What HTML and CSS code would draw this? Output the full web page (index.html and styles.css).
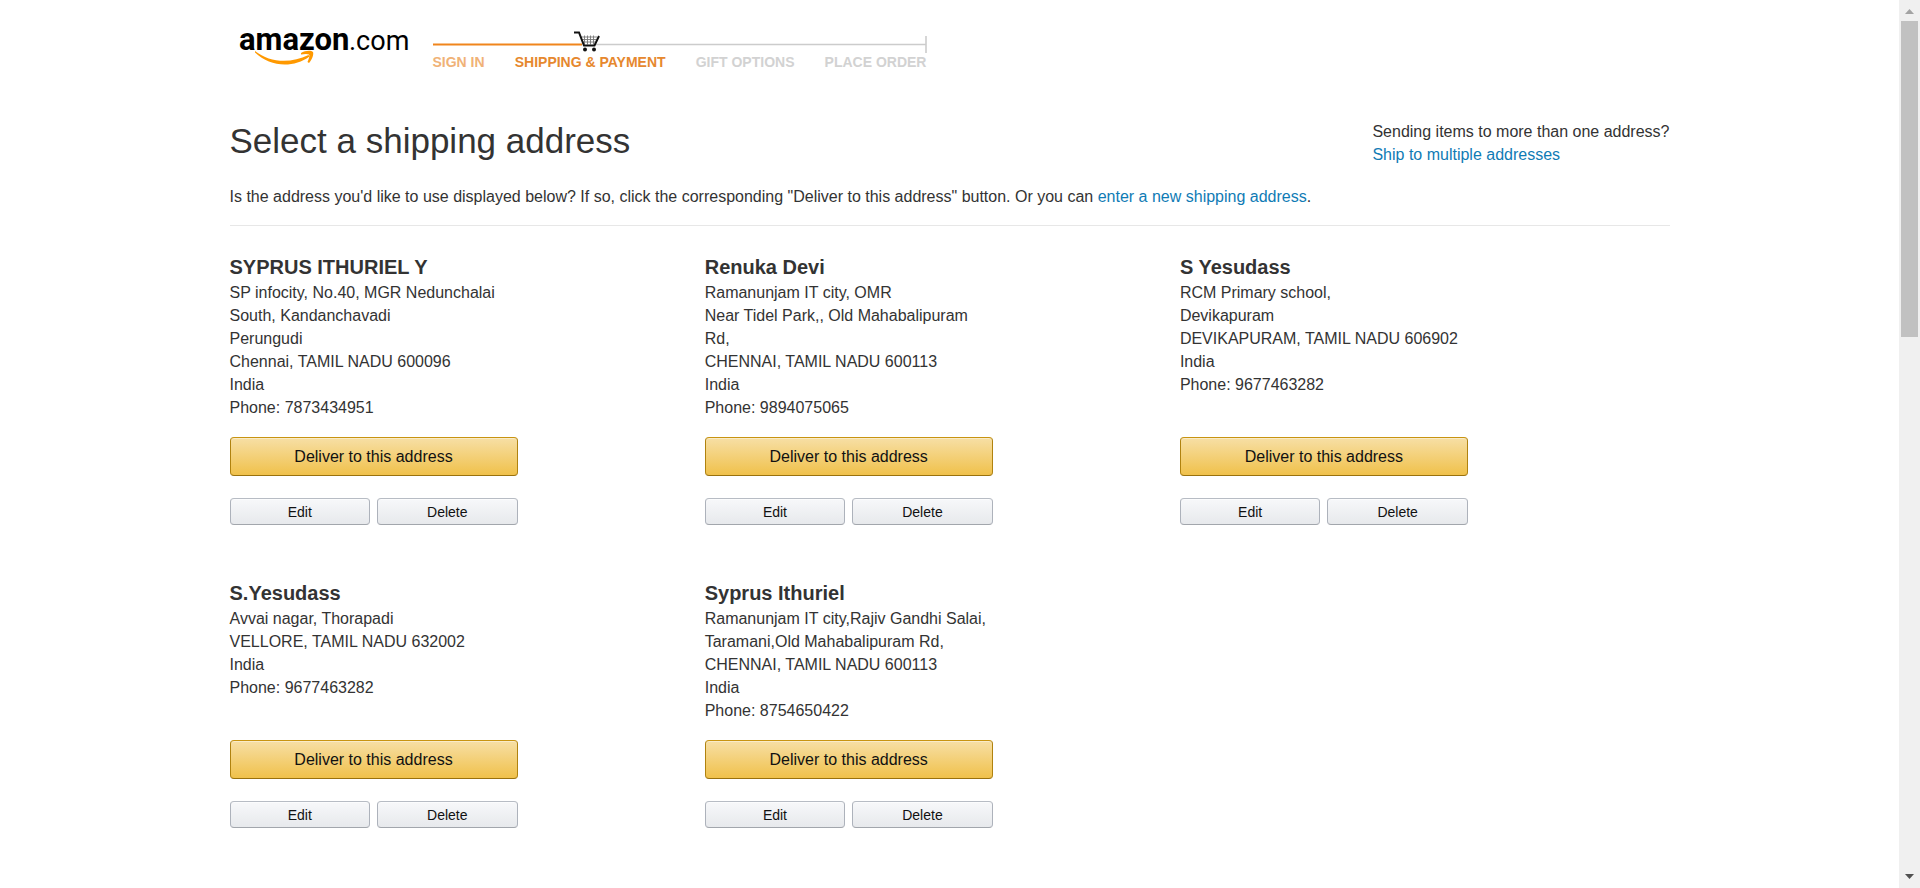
FILE: index.html
```
<!DOCTYPE html>
<html lang="en">
<head>
<meta charset="utf-8">
<title>Select a shipping address</title>
<link rel="stylesheet" href="styles.css">
</head>
<body>
<div class="page">
  <div class="content">
    <header class="header">
      <svg class="logo" width="176" height="48" viewBox="0 0 176 48" role="img" aria-label="amazon.com">
        <text class="logo-bold" x="-1" y="28">amazon</text>
        <text class="logo-light" x="109" y="28">.com</text>
        <path d="M15 29C30 41 51 41.500 68.500 33L69.500 34.500C53 46.500 30 45 15 30.500Z" fill="#f90"/>
        <path d="M61 31C65 28.500 71 28 73 30C74 32.500 72 38 69 41L67.500 40C69 36.500 70 33.500 69 32.500C67 31.500 64 32 61 32.500Z" fill="#f90"/>
      </svg>
      <div class="progress">
        <svg class="track" width="494" height="25" viewBox="0 0 494 25" aria-hidden="true">
          <path d="M150 14.500H493" stroke="#ccc" stroke-width="1.600"/>
          <path d="M493 6v17" stroke="#ccc" stroke-width="1.600"/>
          <path d="M0 14.500H149" stroke="#f0851c" stroke-width="2"/>
          <path d="M146 5h20l-4 10h-12z" fill="#fff"/>
          <path d="M147.500 7H164M148.500 9.500H163M149.500 12H162M151.500 5.500v9M154.500 5.500v9M157.500 5.500v9M160.500 5.500v9" stroke="#777" stroke-width=".9"/>
          <path d="M141 2.500H146L151 15.500H161.500L166 6" fill="none" stroke="#111" stroke-width="2"/>
          <circle cx="152" cy="19.500" r="2" fill="#111"/><circle cx="161" cy="19.500" r="2" fill="#111"/>
        </svg>
        <ol class="steps">
          <li class="done">SIGN IN</li>
          <li class="current">SHIPPING &amp; PAYMENT</li>
          <li>GIFT OPTIONS</li>
          <li>PLACE ORDER</li>
        </ol>
      </div>
    </header>
    <main>
      <div class="intro">
        <div>
          <h1>Select a shipping address</h1>
          <p class="lead">Is the address you'd like to use displayed below? If so, click the corresponding "Deliver to this address" button. Or you can <a href="#">enter a new shipping address</a>.</p>
        </div>
        <p class="multiple">Sending items to more than one address?<br><a href="#">Ship to multiple addresses</a></p>
      </div>
      <div class="cards">
        <section class="card">
          <h2>SYPRUS ITHURIEL Y</h2>
          <address>SP infocity, No.40, MGR Nedunchalai South, Kandanchavadi<br>Perungudi<br>Chennai, TAMIL NADU 600096<br>India<br>Phone: 7873434951</address>
          <button class="btn primary" type="button">Deliver to this address</button>
          <div class="actions"><button class="btn" type="button">Edit</button><button class="btn" type="button">Delete</button></div>
        </section>
        <section class="card">
          <h2>Renuka Devi</h2>
          <address>Ramanunjam IT city, OMR<br>Near Tidel Park,, Old Mahabalipuram Rd,<br>CHENNAI, TAMIL NADU 600113<br>India<br>Phone: 9894075065</address>
          <button class="btn primary" type="button">Deliver to this address</button>
          <div class="actions"><button class="btn" type="button">Edit</button><button class="btn" type="button">Delete</button></div>
        </section>
        <section class="card">
          <h2>S Yesudass</h2>
          <address>RCM Primary school,<br>Devikapuram<br>DEVIKAPURAM, TAMIL NADU 606902<br>India<br>Phone: 9677463282</address>
          <button class="btn primary" type="button">Deliver to this address</button>
          <div class="actions"><button class="btn" type="button">Edit</button><button class="btn" type="button">Delete</button></div>
        </section>
        <section class="card">
          <h2>S.Yesudass</h2>
          <address>Avvai nagar, Thorapadi<br>VELLORE, TAMIL NADU 632002<br>India<br>Phone: 9677463282</address>
          <button class="btn primary" type="button">Deliver to this address</button>
          <div class="actions"><button class="btn" type="button">Edit</button><button class="btn" type="button">Delete</button></div>
        </section>
        <section class="card">
          <h2>Syprus Ithuriel</h2>
          <address>Ramanunjam IT city,Rajiv Gandhi Salai,<br>Taramani,Old Mahabalipuram Rd,<br>CHENNAI, TAMIL NADU 600113<br>India<br>Phone: 8754650422</address>
          <button class="btn primary" type="button">Deliver to this address</button>
          <div class="actions"><button class="btn" type="button">Edit</button><button class="btn" type="button">Delete</button></div>
        </section>
      </div>
    </main>
  </div>
</div>
<div class="scrollbar" aria-hidden="true">
  <svg width="21" height="21" viewBox="0 0 21 21"><path d="M6 14L10.500 9L15 14Z" fill="#a3a3a3"/></svg>
  <div class="rail"><div class="thumb"></div></div>
  <svg width="21" height="21" viewBox="0 0 21 21"><path d="M6 7L10.500 12L15 7Z" fill="#505050"/></svg>
</div>
</body>
</html>
```
FILE: styles.css
```
* { box-sizing: border-box; }

body {
  margin: 0;
  display: flex;
  min-height: 100vh;
  background: #fff;
  color: #333;
  font: 16px/23px "Liberation Sans", Arial, sans-serif;
}

h1, h2, p, ol { margin: 0; padding: 0; }
a { color: #0f7bb5; text-decoration: none; }

.page { flex: 1; min-width: 0; }
.content { max-width: 1440px; margin: 0 auto; }

.header {
  display: flex;
  gap: 17px;
  padding: 22px 10px 0;
}
.logo { flex: none; overflow: visible; }
.logo text { font-family: Roboto, "Liberation Sans", sans-serif; fill: #000; }
.logo-bold { font-size: 31px; font-weight: 700; }
.logo-light { font-size: 27px; }

.progress { padding-top: 8px; }
.track { display: block; overflow: visible; }
.steps {
  display: flex;
  justify-content: space-between;
  list-style: none;
  color: #d2d2d2;
  font-size: 14px;
  font-weight: 700;
  line-height: 14px;
  white-space: nowrap;
}
.done { color: #f0b277; }
.current { color: #e6882e; }

.intro {
  display: flex;
  justify-content: space-between;
  margin-top: 48px;
  padding-bottom: 17px;
  border-bottom: 1px solid #e7e7e7;
}
h1 {
  font-size: 35px;
  font-weight: 400;
  line-height: 46px;
}
.lead { padding-top: 21px; }
.multiple { padding-top: 2px; }

.cards {
  display: grid;
  grid-template-columns: repeat(3, 33%);
  row-gap: 55px;
  padding-top: 28px;
}
.card {
  display: flex;
  flex-direction: column;
  width: 288px;
}
h2 {
  font-size: 20px;
  font-weight: 700;
  line-height: 26px;
  padding-bottom: 1px;
}
address {
  flex: 1;
  font-style: normal;
  padding-bottom: 18px;
}

.btn {
  flex: 1;
  height: 27px;
  padding: 0;
  border: 1px solid;
  border-color: #b7bcc4 #adb2bb #a2a6ac;
  border-radius: 4px;
  background: linear-gradient(#f7f8fa, #e7e9ec);
  box-shadow: inset 0 1px 0 rgba(255, 255, 255, .6);
  color: #111;
  font: 14px "Liberation Sans", Arial, sans-serif;
}
.primary {
  flex: none;
  height: 39px;
  border-color: #c89411 #b0820f #99710d;
  background: linear-gradient(#f7dfa5, #f0c14b);
  box-shadow: inset 0 1px 0 rgba(255, 255, 255, .4);
  font-size: 16px;
}
.actions {
  display: flex;
  gap: 7px;
  padding-top: 22px;
}

.scrollbar {
  position: sticky;
  top: 0;
  display: flex;
  flex-direction: column;
  width: 21px;
  height: 100vh;
  background: #f0f0f0;
}
.rail { flex: 1; padding: 0 2px; }
.thumb { height: 37.4%; background: #c1c1c1; }
```
